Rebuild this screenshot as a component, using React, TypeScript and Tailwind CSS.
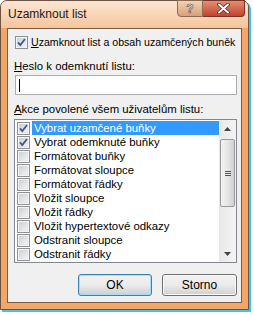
import React from 'react';

const font = { fontFamily: '"Liberation Sans", Arial, sans-serif' };

function Check({ checked }: { checked: boolean }) {
  return (
    <svg width="13" height="13" viewBox="0 0 13 13" className="shrink-0">
      <defs>
        <linearGradient id="cbg" x1="0" y1="0" x2="1" y2="1">
          <stop offset="0" stopColor="#cbcfd5" />
          <stop offset="1" stopColor="#f6f6f6" />
        </linearGradient>
      </defs>
      <rect x="0.5" y="0.5" width="12" height="12" fill="#fff" stroke="#8e8f8f" />
      <rect x="2" y="2" width="9" height="9" fill="url(#cbg)" stroke="#d8dade" strokeWidth="0.6" />
      {checked && (
        <path d="M3 6.3 L5.3 9 L10 3" fill="none" stroke="#3f5598" strokeWidth="1.8" />
      )}
    </svg>
  );
}

const items = [
  { label: 'Vybrat uzamčené buňky', checked: true, selected: true },
  { label: 'Vybrat odemknuté buňky', checked: true },
  { label: 'Formátovat buňky' },
  { label: 'Formátovat sloupce' },
  { label: 'Formátovat řádky' },
  { label: 'Vložit sloupce' },
  { label: 'Vložit řádky' },
  { label: 'Vložit hypertextové odkazy' },
  { label: 'Odstranit sloupce' },
  { label: 'Odstranit řádky' },
];

export default function App() {
  return (
    <div className="w-[254px] h-[315px] bg-white text-[11.4px] text-black" style={font}>
      <div className="w-[249px] h-[310px] flex flex-col rounded-t-[7px] border border-[#6b5443] bg-[#f3a666] shadow-[2px_2px_0_0_#3fc3ec]">
        {/* title bar */}
        <div className="h-[27px] flex rounded-t-[6px] bg-gradient-to-b from-[#fbe6d4] to-[#f5c59b]">
          <div className="pl-[7px] pt-[6px] text-[12px] text-[#1c1c1c] leading-[15px]">Uzamknout list</div>
          <div className="ml-auto mr-[3px] flex h-[17px] -mt-px">
            <div className="w-[26px] h-[17px] rounded-bl-[4px] border border-[#8a6a52] bg-gradient-to-b from-[#f1d2b8] to-[#d4a17a] flex items-center justify-center">
              <span className="text-white font-bold text-[12px] leading-none" style={{ WebkitTextStroke: '0.6px #4a3a30' }}>?</span>
            </div>
            <div className="w-[42px] h-[17px] rounded-br-[4px] border border-l-0 border-[#7a3424] bg-gradient-to-b from-[#e28d76] to-[#c4412a] flex items-center justify-center">
              <svg width="13" height="11" viewBox="0 0 13 11">
                <path d="M2 1.5 L11 9.5 M11 1.5 L2 9.5" stroke="#4b2a22" strokeWidth="3.6" strokeLinecap="round" />
                <path d="M2 1.5 L11 9.5 M11 1.5 L2 9.5" stroke="#fff" strokeWidth="2" strokeLinecap="round" />
              </svg>
            </div>
          </div>
        </div>
        {/* client area */}
        <div className="flex-1 mx-[6px] mb-[6px] border border-[#7a5c46] bg-[#f0f0f0] flex flex-col pl-[6px] pr-[4px]">
          <div className="flex items-center gap-[3px] mt-[7px] h-[13px] pl-px">
            <Check checked />
            <span className="leading-[15px] whitespace-nowrap text-[10.6px]"><span className="underline">U</span>zamknout list a obsah uzamčených buněk</span>
          </div>
          <div className="mt-[10px] leading-[15px]"><span className="underline">H</span>eslo k odemknutí listu:</div>
          <div className="mt-px ml-px h-[20px] border border-[#abadb3] bg-white flex items-center pl-[3px]">
            <div className="w-px h-[13px] bg-black" />
          </div>
          <div className="mt-[7px] leading-[15px]"><span className="underline">A</span>kce povolené všem uživatelům listu:</div>
          <div className="mt-[2px] h-[144px] border border-[#828790] bg-white flex">
            <div className="flex-1 flex flex-col pt-px">
              {items.map((it) => (
                <div key={it.label} className="h-[14px] flex items-center pl-[2px] gap-[2px]">
                  <Check checked={!!it.checked} />
                  <div className={`flex-1 h-[14px] pl-[2px] leading-[14px] whitespace-nowrap ${it.selected ? 'bg-[#3399ff] text-white' : ''}`}>
                    {it.label}
                  </div>
                </div>
              ))}
            </div>
            {/* scrollbar */}
            <div className="w-[17px] bg-gradient-to-r from-[#e8e8e8] to-[#f4f4f4] flex flex-col">
              <div className="h-[17px] flex items-center justify-center">
                <svg width="7" height="4" viewBox="0 0 7 4"><path d="M0 4 L3.5 0 L7 4 Z" fill="#444" /></svg>
              </div>
              <div className="mt-[2px] mx-px h-[68px] rounded-[2px] border border-[#9a9a9a] bg-gradient-to-r from-[#f3f3f3] via-[#e6e6e6] to-[#d0d0d0] flex items-center justify-center">
                <div className="flex flex-col gap-[1px]">
                  <div className="w-[6px] h-px bg-[#555]" />
                  <div className="w-[6px] h-px bg-[#555]" />
                  <div className="w-[6px] h-px bg-[#555]" />
                </div>
              </div>
              <div className="mt-auto h-[17px] flex items-center justify-center">
                <svg width="7" height="4" viewBox="0 0 7 4"><path d="M0 0 L3.5 4 L7 0 Z" fill="#444" /></svg>
              </div>
            </div>
          </div>
          <div className="mt-[11px] flex justify-end gap-[10px]">
            <button className="w-[74px] h-[22px] rounded-[3px] border border-[#3c7fb1] bg-gradient-to-b from-[#f2f2f2] via-[#ebebeb] to-[#cfcfcf] shadow-[inset_0_0_0_1px_#9fe0f8] text-[12px]" style={font}>OK</button>
            <button className="w-[75px] h-[22px] rounded-[3px] border border-[#707070] bg-gradient-to-b from-[#f2f2f2] via-[#ebebeb] to-[#cfcfcf] shadow-[inset_0_0_0_1px_#fbfbfb] text-[12px]" style={font}>Storno</button>
          </div>
        </div>
      </div>
    </div>
  );
}
